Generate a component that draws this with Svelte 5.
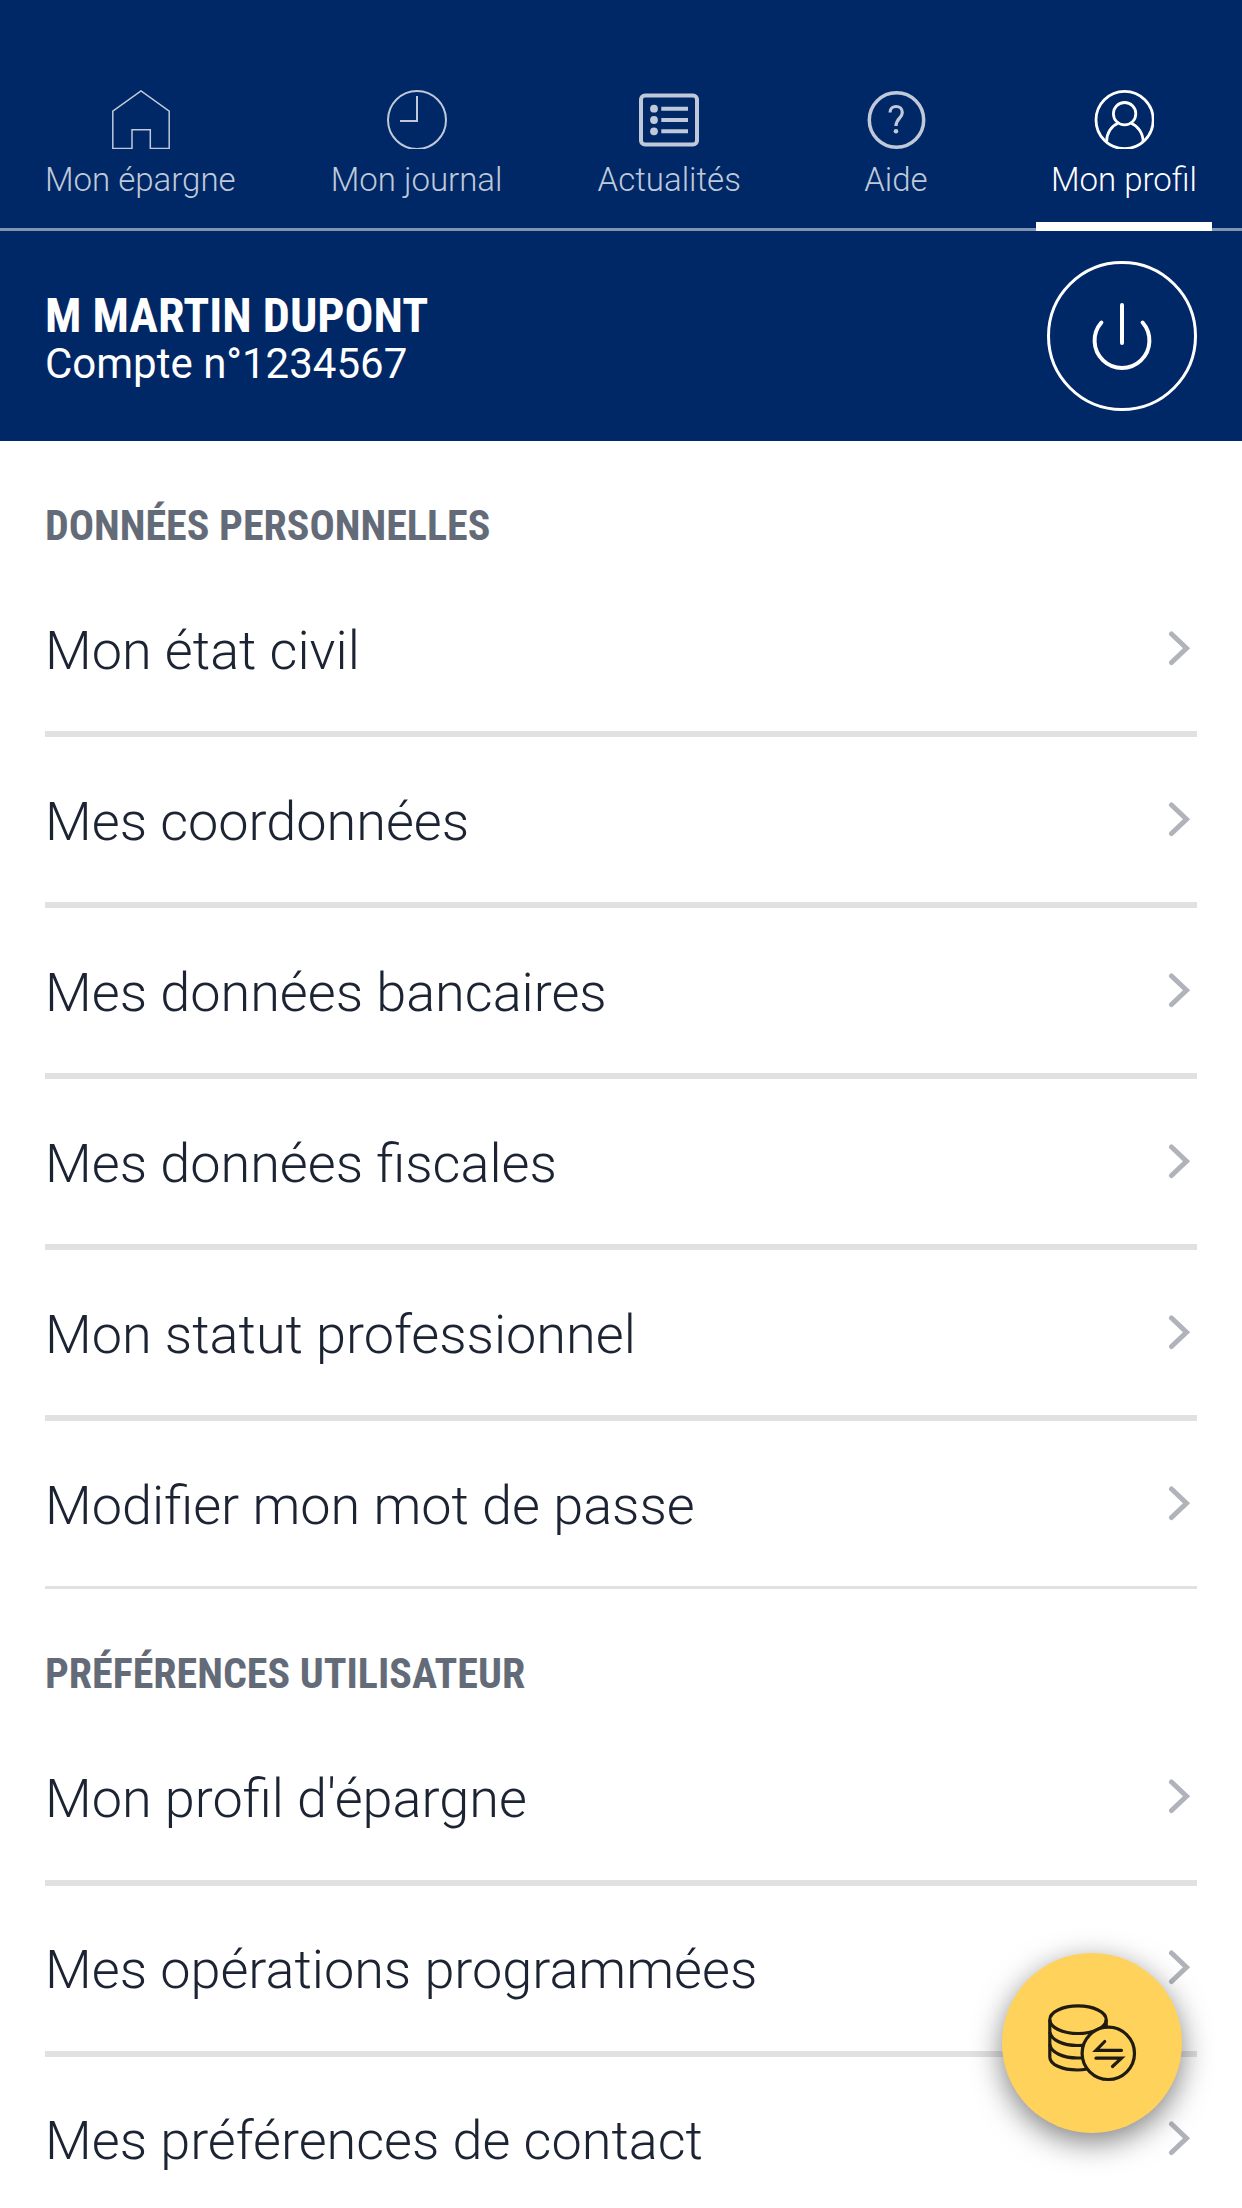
<script>
    const tabs = [
        { id: 'home', label: 'Mon épargne' },
        { id: 'clock', label: 'Mon journal' },
        { id: 'news', label: 'Actualités' },
        { id: 'help', label: 'Aide' },
        { id: 'profile', label: 'Mon profil' }
    ];

    const sections = [
        {
            title: 'DONNÉES PERSONNELLES',
            items: ['Mon état civil', 'Mes coordonnées', 'Mes données bancaires', 'Mes données fiscales', 'Mon statut professionnel', 'Modifier mon mot de passe']
        },
        {
            title: 'PRÉFÉRENCES UTILISATEUR',
            items: ["Mon profil d'épargne", 'Mes opérations programmées', 'Mes préférences de contact']
        }
    ];

    let active = $state('profile');
</script>

<div class="app">
    <header>
        <nav>
            {#each tabs as tab}
                <button class="tab" class:active={active === tab.id} onclick={() => active = tab.id}>
                    <svg width="60" height="59" viewBox="0 0 60 59" fill="none" stroke="currentColor">
                        {#if tab.id === 'home'}
                            <path stroke-width="1.5" d="M2.800 58.5V21.200L31 1L59.200 21.200V58.500H40.300V39.700H22V58.500Z" />
                        {:else if tab.id === 'clock'}
                            <circle stroke-width="2" cx="30" cy="30" r="29" />
                            <path stroke-width="2" d="M30 6V31H13" />
                        {:else if tab.id === 'news'}
                            <rect stroke-width="4" x="2" y="5.5" width="56" height="49" rx="4" />
                            <path stroke-width="4" d="M22.300 18.700H49M22.300 30H49M22.300 41.300H49" />
                            <g fill="currentColor" stroke="none">
                                <circle cx="15" cy="18.700" r="3.900" />
                                <circle cx="15" cy="30" r="3.900" />
                                <circle cx="15" cy="41.300" r="3.900" />
                            </g>
                        {:else if tab.id === 'help'}
                            <circle stroke-width="3.500" cx="30.500" cy="30" r="27.200" />
                            <path stroke-width="3.200" d="M24 22.500C24 14.500 36.300 14.500 36.300 22.500C36.300 28 30 28.500 30 36" />
                            <circle cx="30" cy="41.200" r="2.300" fill="currentColor" stroke="none" />
                        {:else}
                            <circle stroke-width="2.800" cx="30.600" cy="30" r="28.600" />
                            <circle stroke-width="2.800" cx="30.600" cy="23.700" r="11.200" />
                            <path stroke-width="2.800" d="M12.600 51.500C12.600 43 17.300 36 24.100 33.300M37.100 33.300C43.800 36 49.100 43 49.100 51.500" />
                        {/if}
                    </svg>
                    <span>{tab.label}</span>
                </button>
            {/each}
        </nav>
        <div class="account">
            <div class="holder">
                <div class="name">M MARTIN DUPONT</div>
                <div class="number">Compte n°1234567</div>
            </div>
            <button class="logout" aria-label="Déconnexion">
                <svg width="150" height="150" viewBox="0 0 150 150" fill="none" stroke="#fff">
                    <circle stroke-width="3" cx="75" cy="75" r="73.500" />
                    <path stroke-width="4" stroke-linecap="round" d="M75 44V82M54.400 61.500A27.400 27.400 0 1 0 95.600 61.500" />
                </svg>
            </button>
        </div>
    </header>

    <main>
        {#each sections as section}
            <h2>{section.title}</h2>
            <ul>
                {#each section.items as item}
                    <li>
                        <span>{item}</span>
                        <svg width="24" height="36" viewBox="0 0 24 36" fill="none" stroke="#b1b3bb" stroke-width="5" stroke-linecap="round">
                            <path d="M4.500 3L19.500 17.200L4.500 31.500" />
                        </svg>
                    </li>
                {/each}
            </ul>
        {/each}
    </main>

    <button class="fab" aria-label="Opérations">
        <svg width="90" height="80" viewBox="0 0 90 80" fill="none" stroke="#1f1b0e" stroke-width="3.200">
            <ellipse cx="31" cy="16.700" rx="28.200" ry="13.800" />
            <path d="M2.800 16.700V54C2.800 61.500 15 67 30.500 67C34 67 37 66.700 40 66" />
            <path d="M2.800 29C4 37 16 42.500 30.500 42.500L36 42.300M2.800 41.500C4 49.500 16 55 30.500 55H34M59.200 16.700V24" />
            <circle cx="61.300" cy="50.300" r="26.200" fill="#ffd25c" />
            <path stroke-linecap="round" d="M74.500 47.300H49L57.700 38.500M49 55.200H74.500L65.500 63.500" />
        </svg>
    </button>
</div>

<style>
    :global(body) {
        margin: 0;
    }
    .app {
        position: relative;
        height: 2208px;
        overflow: hidden;
        background: #fff;
        font-family: Roboto, sans-serif;
    }
    button {
        padding: 0;
        border: none;
        background: none;
        color: inherit;
        font: inherit;
    }
    svg {
        display: block;
    }
    header {
        height: 441px;
        background: #002766;
        color: #fff;
    }
    nav {
        display: flex;
        justify-content: space-between;
        box-sizing: border-box;
        height: 231px;
        padding: 90px 30px 0;
        border-bottom: 3px solid #7f93b3;
    }
    .tab {
        display: flex;
        flex-direction: column;
        align-items: center;
        box-sizing: border-box;
        min-width: 150px;
        height: 141px;
        padding: 0 15px;
        color: #bfc9d9;
        font-size: 33px;
        font-weight: 300;
        line-height: 62px;
    }
    .tab.active {
        color: #fff;
        border-bottom: 9px solid #fff;
    }
    .account {
        display: flex;
        justify-content: space-between;
        align-items: center;
        height: 210px;
        padding: 0 45px;
    }
    .holder {
        padding-top: 8px;
    }
    .name {
        font-family: 'Roboto Condensed', Roboto, sans-serif;
        font-stretch: 75%;
        font-size: 48px;
        font-weight: 700;
        line-height: 48px;
    }
    .number {
        font-size: 42px;
        line-height: 48px;
    }
    main {
        padding: 0 45px;
    }
    h2 {
        box-sizing: border-box;
        margin: 0;
        padding-top: 60px;
        height: 125.4px;
        font-family: 'Roboto Condensed', Roboto, sans-serif;
        font-stretch: 75%;
        font-size: 42px;
        font-weight: 700;
        line-height: 50px;
        color: #646b78;
    }
    ul {
        margin: 0;
        padding: 0;
        list-style: none;
    }
    li {
        display: flex;
        justify-content: space-between;
        align-items: center;
        height: 165px;
        padding-right: 6px;
        border-bottom: 3px solid #e1e1e1;
        font-size: 54px;
        font-weight: 300;
        color: #1c2433;
    }
    li + li {
        border-top: 3px solid #e1e1e1;
    }
    li span {
        padding-top: 2.4px;
    }
    .fab {
        position: absolute;
        right: 60px;
        bottom: 75px;
        display: flex;
        align-items: center;
        justify-content: center;
        width: 180px;
        height: 180px;
        border-radius: 50%;
        background: #ffd25c;
        box-shadow: 0 9px 30px rgba(0, 0, 0, .5);
    }
</style>
